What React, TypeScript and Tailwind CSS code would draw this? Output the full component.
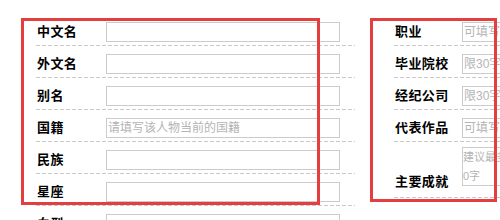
import { FC } from "react";

interface FieldProps {
  label: string;
  placeholder?: string;
  labelWidth: string;
  inputWidth: string;
}

const dashed =
  "bg-[linear-gradient(to_right,#c8c8c8_4px,transparent_4px)] bg-[length:6px_1px] bg-repeat-x bg-bottom";

const Field: FC<FieldProps> = ({ label, placeholder, labelWidth, inputWidth }) => (
  <div className={`flex items-start h-[32px] pt-[8px] ${dashed}`}>
    <div
      className={`${labelWidth} shrink-0 h-[20px] flex items-center pl-[2px] text-[13px] font-bold tracking-[0.4px] text-black`}
    >
      {label}
    </div>
    <input
      className={`${inputWidth} shrink-0 h-[20px] border border-[#cccccc] px-[1px] text-[12px] outline-none placeholder:text-[#b4b4b4]`}
      placeholder={placeholder}
    />
  </div>
);

const leftFields = [
  { label: "中文名" },
  { label: "外文名" },
  { label: "别名" },
  { label: "国籍", placeholder: "请填写该人物当前的国籍" },
  { label: "民族" },
  { label: "星座" },
  { label: "血型" },
];

const rightFields = [
  { label: "职业", placeholder: "可填写多个职业" },
  { label: "毕业院校", placeholder: "限30字" },
  { label: "经纪公司", placeholder: "限30字" },
  { label: "代表作品", placeholder: "可填写多个作品" },
];

export default function App() {
  return (
    <div className="relative w-[500px] h-[220px] overflow-hidden bg-white font-['Liberation_Sans','Noto_Sans_CJK_SC',sans-serif]">
      <div className="flex pt-[14px]">
        <div className="ml-[35px] w-[320px] shrink-0">
          {leftFields.map((f) => (
            <Field key={f.label} {...f} labelWidth="w-[71px]" inputWidth="w-[234px]" />
          ))}
        </div>
        <div className="ml-[38px] w-[200px] shrink-0">
          {rightFields.map((f) => (
            <Field key={f.label} {...f} labelWidth="w-[69px]" inputWidth="w-[130px]" />
          ))}
          <div className={`flex items-start h-[56px] pt-[5px] ${dashed}`}>
            <div className="w-[69px] shrink-0 h-[20px] mt-[25px] flex items-center pl-[2px] text-[13px] font-bold tracking-[0.4px] text-black">
              主要成就
            </div>
            <textarea
              className="w-[83px] shrink-0 h-[39px] border border-[#cccccc] px-0 py-0 text-[11px] leading-[19px] resize-none outline-none overflow-hidden break-all placeholder:text-[#b4b4b4]"
              placeholder="建议最多填写500字"
            />
          </div>
        </div>
      </div>

      {/* annotation boxes */}
      <div className="absolute left-[21px] top-[18px] w-[299px] h-[187px] border-[3px] border-[#e53e3e]" />
      <div className="absolute left-[370px] top-[18px] w-[127px] h-[184px] border-[3px] border-[#e53e3e]" />
    </div>
  );
}
